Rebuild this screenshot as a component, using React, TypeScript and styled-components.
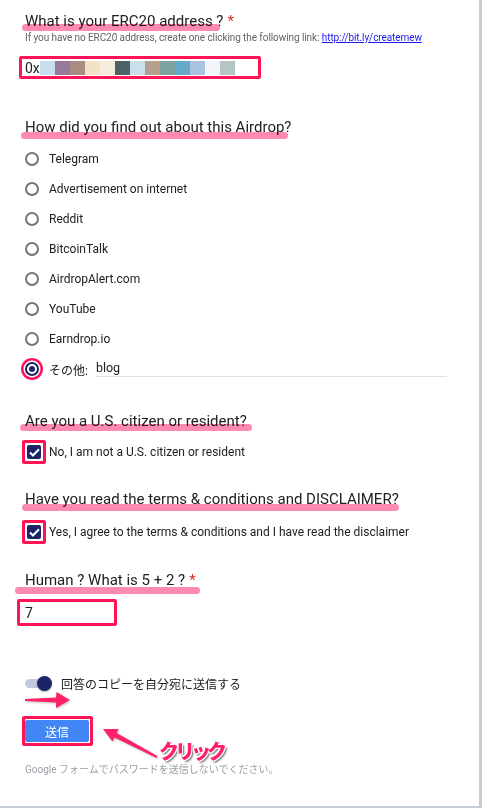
import React from "react";
import styled, { createGlobalStyle, css } from "styled-components";

const PINK = "#ff1458";
const MARK = "#ff8ab0";
const NAVY = "#1b2468";

const Global = createGlobalStyle`
  html, body { margin: 0; padding: 0; background: #fff; }
  body {
    font-family: Roboto, "Noto Sans CJK JP", sans-serif;
    color: #202124;
  }
`;

const Card = styled.div`
  position: relative;
  box-sizing: border-box;
  width: 482px;
  height: 808px;
  padding: 11px 0 0 25px;
  background: #fff;
  border-right: 3px solid #c6cbd8;
  border-bottom: 2px solid #c6cbd8;
  overflow: hidden;
`;

const Question = styled.section<{ $gap: number }>`
  display: flex;
  flex-direction: column;
  align-items: flex-start;
  margin-top: ${(p) => p.$gap}px;
`;

const Title = styled.div`
  position: relative;
  font-size: 15px;
  line-height: 20px;
  height: 20px;
  white-space: nowrap;
  color: #202124;
`;

const Required = styled.span`
  color: #d93025;
  margin-left: 4px;
`;

const Mark = styled.span<{ $left: number; $width: number; $top: number }>`
  position: absolute;
  left: ${(p) => p.$left}px;
  top: ${(p) => p.$top}px;
  width: ${(p) => p.$width}px;
  height: 7px;
  border-radius: 4px;
  background: ${MARK};
  mix-blend-mode: multiply;
  pointer-events: none;
`;

const Hint = styled.div`
  font-size: 10px;
  letter-spacing: -0.08px;
  line-height: 14px;
  color: #5f6368;
  white-space: nowrap;
  a {
    color: #1a1aee;
    text-decoration: underline;
  }
`;

const FramedInput = styled.div<{ $w: number; $h: number; $shift: number; $gap: number; $pad: number }>`
  box-sizing: border-box;
  width: ${(p) => p.$w}px;
  height: ${(p) => p.$h}px;
  margin-top: ${(p) => p.$gap}px;
  margin-left: -${(p) => p.$shift}px;
  padding-left: ${(p) => p.$pad}px;
  border: 3px solid ${PINK};
  border-radius: 2px;
  display: flex;
  align-items: center;
  font-size: 14px;
  color: #202124;
`;

const Mosaic = styled.span`
  display: flex;
  height: 14px;
`;

const Tile = styled.span<{ $c: string }>`
  width: 15px;
  height: 14px;
  background: ${(p) => p.$c};
`;

const Options = styled.div`
  display: flex;
  flex-direction: column;
  margin-top: 7px;
  width: 100%;
`;

const Option = styled.div`
  display: flex;
  align-items: center;
  gap: 10px;
  height: 30px;
  font-size: 12px;
  color: #202124;
`;

const RadioDot = styled.span<{ $on?: boolean }>`
  position: relative;
  flex: none;
  box-sizing: border-box;
  width: 14px;
  height: 14px;
  border-radius: 50%;
  border: 2px solid #757575;
  background: #fff;
  ${(p) =>
    p.$on &&
    css`
      border-color: ${NAVY};
      box-shadow: 0 0 0 1.5px #fff;
      &::after {
        content: "";
        position: absolute;
        left: 2px;
        top: 2px;
        width: 6px;
        height: 6px;
        border-radius: 50%;
        background: ${NAVY};
      }
    `}
`;

const Halo = styled.span`
  flex: none;
  width: 22px;
  height: 22px;
  margin: -4px;
  border-radius: 50%;
  background: ${PINK};
  display: grid;
  place-items: center;
`;

const OtherLabel = styled.span`
  white-space: nowrap;
`;

const OtherInput = styled.span`
  box-sizing: border-box;
  width: 351px;
  height: 16px;
  margin-left: -2px;
  border-bottom: 1px solid #e0e0e0;
  font-size: 12.5px;
  line-height: 14px;
  color: #202124;
`;

const CheckRow = styled.div<{ $gap: number }>`
  display: flex;
  align-items: center;
  gap: 3px;
  margin-top: ${(p) => p.$gap}px;
  font-size: 12px;
  color: #202124;
  white-space: nowrap;
`;

const CheckFrame = styled.span`
  box-sizing: border-box;
  flex: none;
  width: 24px;
  height: 24px;
  margin-left: -3px;
  border: 3px solid ${PINK};
  border-radius: 2px;
  padding: 2px;
  display: flex;
`;

const CheckBox = styled.span`
  width: 14px;
  height: 14px;
  border-radius: 2px;
  background: ${NAVY};
  display: grid;
  place-items: center;
`;

const ToggleRow = styled.div`
  display: flex;
  align-items: center;
  gap: 11px;
  height: 20px;
  margin-top: 47px;
  font-size: 12px;
  color: #202124;
`;

const Switch = styled.span`
  position: relative;
  flex: none;
  width: 25px;
  height: 9px;
  border-radius: 5px;
  background: #c3c8dc;
  &::after {
    content: "";
    position: absolute;
    left: 12px;
    top: -3px;
    width: 15px;
    height: 15px;
    border-radius: 50%;
    background: ${NAVY};
    box-shadow: 0 1px 2px rgba(0, 0, 0, 0.3);
  }
`;

const ButtonFrame = styled.div`
  box-sizing: border-box;
  width: 71px;
  height: 30px;
  margin-top: 23px;
  margin-left: -3px;
  border: 3px solid ${PINK};
  border-radius: 2px;
  padding: 1px 1px 1px 0;
  display: flex;
`;

const SubmitButton = styled.button`
  flex: 1;
  border: none;
  border-radius: 2px;
  background: #4285f4;
  color: #fff;
  font-family: inherit;
  font-size: 12px;
  padding: 0;
`;

const Footer = styled.div`
  margin-top: 18px;
  font-size: 10px;
  line-height: 12px;
  color: #9aa0a6;
`;

const Overlay = styled.svg<{ $x: number; $y: number }>`
  position: absolute;
  left: ${(p) => p.$x}px;
  top: ${(p) => p.$y}px;
  overflow: visible;
  filter: drop-shadow(1px 1px 1px rgba(0, 0, 0, 0.25));
`;

const Callout = styled.span`
  position: absolute;
  left: 159px;
  top: 742px;
  font-family: "Noto Sans CJK JP", sans-serif;
  font-size: 20px;
  line-height: 18px;
  font-weight: 900;
  letter-spacing: -4px;
  color: #ff1f6e;
  text-shadow: -1px -1px 0 #fff, 1px -1px 0 #fff, -1px 1px 0 #fff, 1px 1px 0 #fff,
    2px 2px 2px rgba(0, 0, 0, 0.6);
`;

const tiles = [
  "#c8dfee",
  "#957a9a",
  "#ab8c82",
  "#f2e1c2",
  "#f5eedd",
  "#4f6168",
  "#cce0ec",
  "#b5a08d",
  "#7ea39e",
  "#65a9cb",
  "#a9c2e0",
  "#f1f4f8",
  "#b5c4c4",
];

const sources = [
  "Telegram",
  "Advertisement on internet",
  "Reddit",
  "BitcoinTalk",
  "AirdropAlert.com",
  "YouTube",
  "Earndrop.io",
];

const Check = () => (
  <svg width="11" height="9" viewBox="0 0 11 9">
    <path d="M1 4.5 L4 7.5 L10 1.2" fill="none" stroke="#fff" strokeWidth="2" />
  </svg>
);

export default function App() {
  return (
    <>
      <Global />
      <Card>
        <Question $gap={0}>
          <Title>
            What is your ERC20 address ?<Required>*</Required>
            <Mark $left={-3} $width={198} $top={13} />
          </Title>
          <Hint>
            If you have no ERC20 address, create one clicking the following link:{" "}
            <a href="#">http://bit.ly/createmew</a>
          </Hint>
          <FramedInput $w={242} $h={23} $shift={6} $gap={11} $pad={3}>
            0x
            <Mosaic>
              {tiles.map((c, i) => (
                <Tile key={i} $c={c} />
              ))}
            </Mosaic>
          </FramedInput>
        </Question>

        <Question $gap={38}>
          <Title>
            How did you find out about this Airdrop?
            <Mark $left={-4} $width={267} $top={15} />
          </Title>
          <Options>
            {sources.map((s) => (
              <Option key={s}>
                <RadioDot />
                {s}
              </Option>
            ))}
            <Option>
              <Halo>
                <RadioDot $on />
              </Halo>
              <OtherLabel>その他:</OtherLabel>
              <OtherInput>blog</OtherInput>
            </Option>
          </Options>
        </Question>

        <Question $gap={27}>
          <Title>
            Are you a U.S. citizen or resident?
            <Mark $left={-5} $width={232} $top={13} />
          </Title>
          <CheckRow $gap={9}>
            <CheckFrame>
              <CheckBox>
                <Check />
              </CheckBox>
            </CheckFrame>
            No, I am not a U.S. citizen or resident
          </CheckRow>
        </Question>

        <Question $gap={25}>
          <Title>
            Have you read the terms &amp; conditions and DISCLAIMER?
            <Mark $left={-3} $width={377} $top={15} />
          </Title>
          <CheckRow $gap={11}>
            <CheckFrame>
              <CheckBox>
                <Check />
              </CheckBox>
            </CheckFrame>
            Yes, I agree to the terms &amp; conditions and I have read the disclaimer
          </CheckRow>
        </Question>

        <Question $gap={26}>
          <Title>
            Human ? What is 5 + 2 ?<Required>*</Required>
            <Mark $left={-10} $width={185} $top={17} />
          </Title>
          <FramedInput $w={100} $h={27} $shift={8} $gap={9} $pad={5}>
            7
          </FramedInput>
        </Question>

        <ToggleRow>
          <Switch />
          回答のコピーを自分宛に送信する
        </ToggleRow>

        <ButtonFrame>
          <SubmitButton>送信</SubmitButton>
        </ButtonFrame>

        <Footer>Google フォームでパスワードを送信しないでください。</Footer>

        <Overlay $x={20} $y={688} width="55" height="24" viewBox="20 688 55 24">
          <polygon
            points="25,699 56,697.5 56.5,692 70,700 56,708 56,702.5 25,701"
            fill="#ff2266"
          />
        </Overlay>
        <Overlay $x={100} $y={725} width="62" height="36" viewBox="100 725 62 36">
          <polygon
            points="103,729 118.6,729 116.6,733.1 157.4,756.1 156.6,757.9 114.4,737.5 112.4,741.6"
            fill="#ff2266"
          />
        </Overlay>
        <Callout>クリック</Callout>
      </Card>
    </>
  );
}
